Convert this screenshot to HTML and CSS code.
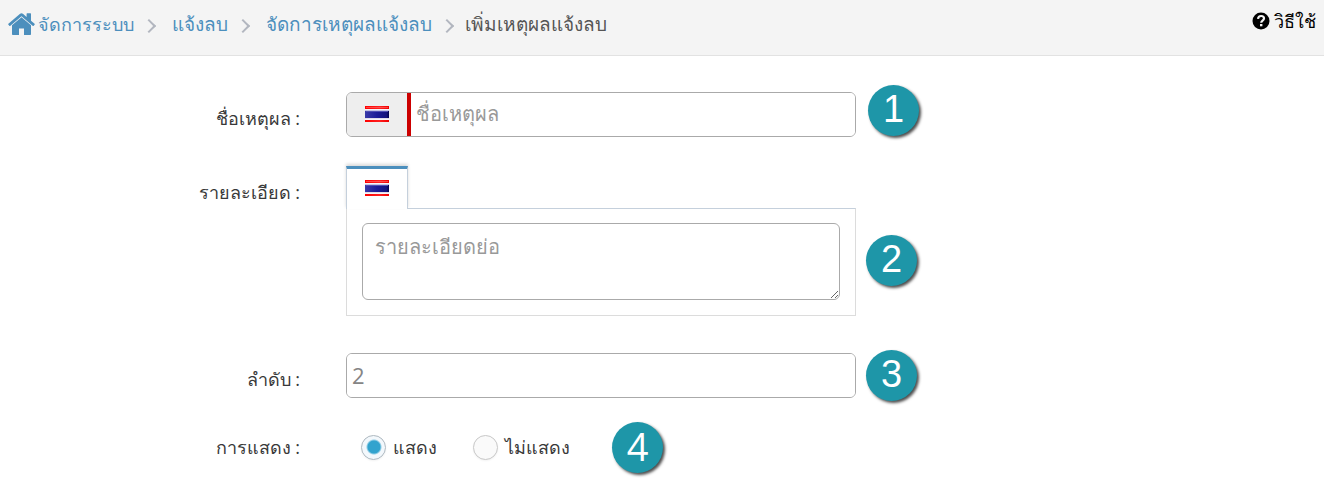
FILE: index.html
```html
<!DOCTYPE html>
<html lang="th">
<head>
<meta charset="utf-8">
<meta name="viewport" content="width=device-width, initial-scale=1">
<title>เพิ่มเหตุผลแจ้งลบ</title>
<link rel="stylesheet" href="styles.css">
</head>
<body>
<svg class="defs" aria-hidden="true">
  <defs>
    <linearGradient id="flag-red" x1="0" y1="0" x2="1" y2="0">
      <stop offset="0" stop-color="#f00"/><stop offset=".6" stop-color="#ff2020"/><stop offset="1" stop-color="#f00000"/>
    </linearGradient>
    <linearGradient id="flag-blue" x1="0" y1="0" x2="1" y2="0">
      <stop offset="0" stop-color="#3a3aa8"/><stop offset=".5" stop-color="#1c1c98"/><stop offset=".9" stop-color="#14147c"/><stop offset="1" stop-color="#00004c"/>
    </linearGradient>
    <symbol id="flag-th" viewBox="0 0 24 16">
      <rect width="24" height="16" fill="#f4f4fa"/>
      <rect width="24" height="3" fill="url(#flag-red)"/>
      <rect y="1" x="1" width="22" height="1" fill="#ff8080" opacity=".5"/>
      <rect y="4" width="24" height="8" fill="#c4c4e4"/>
      <rect y="5" width="24" height="7" fill="url(#flag-blue)"/>
      <rect y="5" x="1" width="22" height="1" fill="#5050b4"/>
      <rect y="12" width="24" height="1" fill="#e0dce8"/>
      <rect y="14" width="24" height="2" fill="url(#flag-red)"/>
    </symbol>
  </defs>
</svg>
<header class="topbar">
  <nav aria-label="breadcrumb">
    <ol class="crumbs">
      <li><a class="home" href="#"><svg class="home-icon" viewBox="0 0 27 22" aria-hidden="true"><path d="M13.500 4.200 4 12.300V21.200q0 .8.800.8H11v-6.500h5V22h6.200q.8 0 .8-.8v-8.900z"/><path d="M26.600 10.800 23 7.700V.8q0-.6-.6-.6h-3.200q-.6 0-.6.600v3.100L15.200 1q-1.700-1.400-3.400 0L.4 10.800q-.4.400-.1.800l1 1.200q.4.400.8.100L13.500 3.200l11.400 9.700q.4.300.8-.1l1-1.200q.3-.4-.1-.8z"/></svg>จัดการระบบ</a></li>
      <li><a href="#">แจ้งลบ</a></li>
      <li><a href="#">จัดการเหตุผลแจ้งลบ</a></li>
      <li aria-current="page">เพิ่มเหตุผลแจ้งลบ</li>
    </ol>
  </nav>
  <a class="help" href="#"><svg class="help-icon" viewBox="0 0 18 18" aria-hidden="true"><circle cx="9" cy="9" r="8.500"/><path d="M6 6.800C6.200 4.900 7.400 4 9.100 4c1.700 0 2.900 1 2.900 2.500 0 2.200-2.800 2.200-2.800 4.300" fill="none" stroke="#f4f4f4" stroke-width="2.200"/><rect x="8" y="12" width="2.400" height="2.300" fill="#f4f4f4"/></svg>วิธีใช้</a>
</header>
<main>
  <form class="form">
    <div class="row">
      <label class="label" for="name">ชื่อเหตุผล :</label>
      <div class="group">
        <span class="addon"><svg class="flag" role="img" aria-label="ไทย"><use href="#flag-th"/></svg></span>
        <input class="text required" id="name" type="text" placeholder="ชื่อเหตุผล" required>
      </div>
      <div class="note"><span class="badge badge-name">1</span></div>
    </div>
    <div class="row row-detail">
      <label class="label" for="detail">รายละเอียด :</label>
      <div>
        <button class="tab" type="button"><svg class="flag" role="img" aria-label="ไทย"><use href="#flag-th"/></svg></button>
        <div class="panel"><textarea class="area" id="detail" placeholder="รายละเอียดย่อ"></textarea></div>
      </div>
      <div class="note"><span class="badge badge-detail">2</span></div>
    </div>
    <div class="row">
      <label class="label" for="order">ลำดับ :</label>
      <div class="group"><input class="text" id="order" type="text" value="2"></div>
      <div class="note"><span class="badge badge-order">3</span></div>
    </div>
    <div class="row row-show" role="radiogroup" aria-labelledby="show-label">
      <span class="label" id="show-label">การแสดง :</span>
      <div class="choices">
        <label class="choice"><input class="radio" type="radio" name="show" checked>แสดง</label>
        <label class="choice"><input class="radio" type="radio" name="show">ไม่แสดง</label>
        <span class="badge badge-show">4</span>
      </div>
    </div>
  </form>
</main>
</body>
</html>
```
FILE: styles.css
```css
* { box-sizing: border-box; }
body {
  margin: 0;
  background: #fff;
  color: #393939;
  font: 18px/24px "Open Sans", sans-serif;
}
a { color: #4c8fbd; text-decoration: none; }
.defs { position: absolute; width: 0; height: 0; }

.topbar {
  display: flex;
  justify-content: space-between;
  align-items: flex-start;
  min-height: 56px;
  padding: 12px 8px;
  background: #f4f4f4;
  border-bottom: 1px solid #e2e2e2;
}
.crumbs {
  display: flex;
  flex-wrap: wrap;
  margin: 0;
  padding: 0;
  list-style: none;
  color: #555;
  font-size: 19px;
}
.crumbs li { display: flex; align-items: center; }
.crumbs li + li::before {
  content: "";
  width: 8px;
  height: 8px;
  margin: 4px 18px 0 10px;
  border: solid #b2b6bf;
  border-width: 2px 2px 0 0;
  transform: rotate(45deg);
}
.crumbs li:last-child::before { margin-right: 13px; }
.home { display: flex; align-items: center; gap: 3px; font-size: 18px; }
.home-icon { width: 27px; height: 22px; fill: #4c8fbd; }
.help {
  display: flex;
  align-items: center;
  gap: 4px;
  color: #000;
  line-height: 18px;
}
.help-icon { width: 18px; height: 18px; }

.form { padding: 36px 0 24px; }
.row {
  display: grid;
  grid-template-columns: 346fr 510fr 468fr;
  margin-bottom: 29px;
}
.row-detail { margin-bottom: 37px; }
.label {
  padding: 14px 46px 0 0;
  text-align: right;
}
.group {
  display: flex;
  height: 45px;
  border: 1px solid #aaa;
  border-radius: 6px;
  overflow: hidden;
}
.addon {
  display: flex;
  flex: none;
  align-items: center;
  justify-content: center;
  width: 60px;
  padding-bottom: 1px;
  background: #eee;
}
.flag { display: block; width: 24px; height: 16px; }
.text {
  flex: 1;
  min-width: 0;
  padding: 0 5px 2px;
  border: 0;
  outline: 0;
  background: #fff;
  color: #858585;
  font: 22px "Open Sans", sans-serif;
}
.required { border-left: 4px solid #c00; font-size: 20px; }
::placeholder { color: #999; opacity: 1; }

.tab {
  display: flex;
  position: relative;
  align-items: center;
  justify-content: center;
  width: 62px;
  height: 43px;
  margin-bottom: -1px;
  padding: 0 0 2px;
  border: 1px solid #c5d0dc;
  border-top: 3px solid #4c8fbd;
  border-bottom: 0;
  background: #fff;
  box-shadow: 0 -2px 3px rgba(0, 0, 0, .15);
}
.panel {
  padding: 14px 15px 15px;
  border: 1px solid #dcdcdc;
  border-top-color: #c5d0dc;
}
.area {
  display: block;
  width: 100%;
  height: 77px;
  padding: 9px 12px;
  border: 1px solid #aaa;
  border-radius: 6px;
  outline: 0;
  color: #858585;
  font: 20px/28px "Open Sans", sans-serif;
  resize: both;
}

.note { position: relative; }
.badge {
  width: 51px;
  height: 51px;
  border-radius: 50%;
  background: #1e96a8;
  box-shadow: 2px 2px 3px rgba(0, 0, 0, .7);
  color: #fff;
  font: 38px/49px "Liberation Sans", Arial, sans-serif;
  text-align: center;
}
.note .badge { position: absolute; left: 10px; }
.note .badge-name { top: -7px; left: 12px; }
.badge-detail { top: 69px; }
.badge-order { top: -3px; }
.badge-show { margin-left: 6px; font-family: "Open Sans", sans-serif; }

.row-show { align-items: center; margin: -5px 0 0; }
.row-show .label { padding-top: 0; padding-bottom: 2px; }
.choices { display: flex; align-items: center; gap: 36px; padding-left: 15px; }
.choice { display: flex; align-items: center; gap: 7px; padding-bottom: 1px; }
.radio {
  appearance: none;
  width: 25px;
  height: 25px;
  margin: 0;
  border: 1px solid #c8c8c8;
  border-radius: 50%;
  background: #fafafa;
  box-shadow: 0 1px 2px rgba(0, 0, 0, .05);
}
.radio:checked {
  border-color: #adb8c0;
  background: radial-gradient(circle at 12px 11px, #32a3ce 6px, #f3f8fc 8px);
}
```
